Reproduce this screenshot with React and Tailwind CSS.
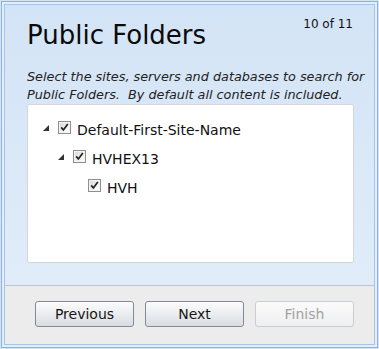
import React from 'react';

const font = { fontFamily: '"DejaVu Sans", Verdana, sans-serif' };

function CheckBox() {
  return (
    <svg width="13" height="13" viewBox="0 0 13 13" className="shrink-0">
      <defs>
        <linearGradient id="cbg" x1="0" y1="0" x2="1" y2="1">
          <stop offset="0" stopColor="#dcdcdc" />
          <stop offset="1" stopColor="#ffffff" />
        </linearGradient>
      </defs>
      <rect x="0.5" y="0.5" width="12" height="12" fill="#f4f4f4" stroke="#8f8f8f" />
      <rect x="2" y="2" width="9" height="9" fill="url(#cbg)" />
      <path d="M3.2 6.4 L5.4 9 L9.8 3" fill="none" stroke="#222" strokeWidth="1.7" />
    </svg>
  );
}

function Expander() {
  return (
    <svg width="6" height="6" viewBox="0 0 6 6" className="shrink-0">
      <polygon points="6,0 6,6 0,6" fill="#333" />
    </svg>
  );
}

function TreeRow({ level, expanded, label }) {
  const pads = ['pl-[15px]', 'pl-[30px]', 'pl-[45px]'];
  return (
    <div className={`flex items-center h-[29px] ${pads[level]}`}>
      <div className="w-[15px] flex items-center">{expanded && <Expander />}</div>
      <CheckBox />
      <span className="ml-[6px] mt-[4px] text-[14px] text-[#111] leading-[16px] whitespace-nowrap">{label}</span>
    </div>
  );
}

function WizButton({ children, disabled }) {
  return (
    <button
      className={`w-[99px] h-[26px] rounded-[3px] border text-[14px] leading-none ${
        disabled
          ? 'border-[#c9ced4] bg-gradient-to-b from-[#fbfbfb] to-[#eeeff1] text-[#a3a3a3]'
          : 'border-[#808b97] bg-gradient-to-b from-[#fcfcfc] to-[#d9dde2] text-[#151515]'
      }`}
    >
      {children}
    </button>
  );
}

export default function App() {
  return (
    <div className="w-[379px] h-[349px] bg-[#d2e3f5] p-px" style={font}>
      <div className="h-full border border-[#8fb2de]">
        <div className="h-full p-[2px] bg-[#e4eefa]">
          <div className="h-full border border-[#a8c4e8] flex flex-col">
            {/* header */}
            <div className="flex-1 bg-gradient-to-b from-[#d3e4f6] to-[#e0ecf9] pl-[22px] pr-[20px] pt-[15px]">
              <div className="flex justify-between items-start">
                <h1 className="text-[26px] leading-[30px] text-[#0a0a0a]">Public Folders</h1>
                <span className="text-[12px] leading-[15px] text-[#111] mt-[-3px] mr-px">10 of 11</span>
              </div>
              <p className="mt-[18px] text-[12.8px] leading-[18px] italic text-[#222] whitespace-nowrap">
                Select the sites, servers and databases to search for
                <br />
                Public Folders.&nbsp; By default all content is included.
              </p>
              <div className="h-[159px] bg-white border border-[#d3d6da] rounded-[2px] pt-[8px]">
                <TreeRow level={0} expanded label="Default-First-Site-Name" />
                <TreeRow level={1} expanded label="HVHEX13" />
                <TreeRow level={2} label="HVH" />
              </div>
            </div>
            {/* footer */}
            <div className="h-[59px] shrink-0 border-t border-[#bcc6d0] bg-[#ececec] flex justify-end items-start gap-[11px] pr-[20px] pt-[15px]">
              <WizButton>Previous</WizButton>
              <WizButton>Next</WizButton>
              <WizButton disabled>Finish</WizButton>
            </div>
          </div>
        </div>
      </div>
    </div>
  );
}
